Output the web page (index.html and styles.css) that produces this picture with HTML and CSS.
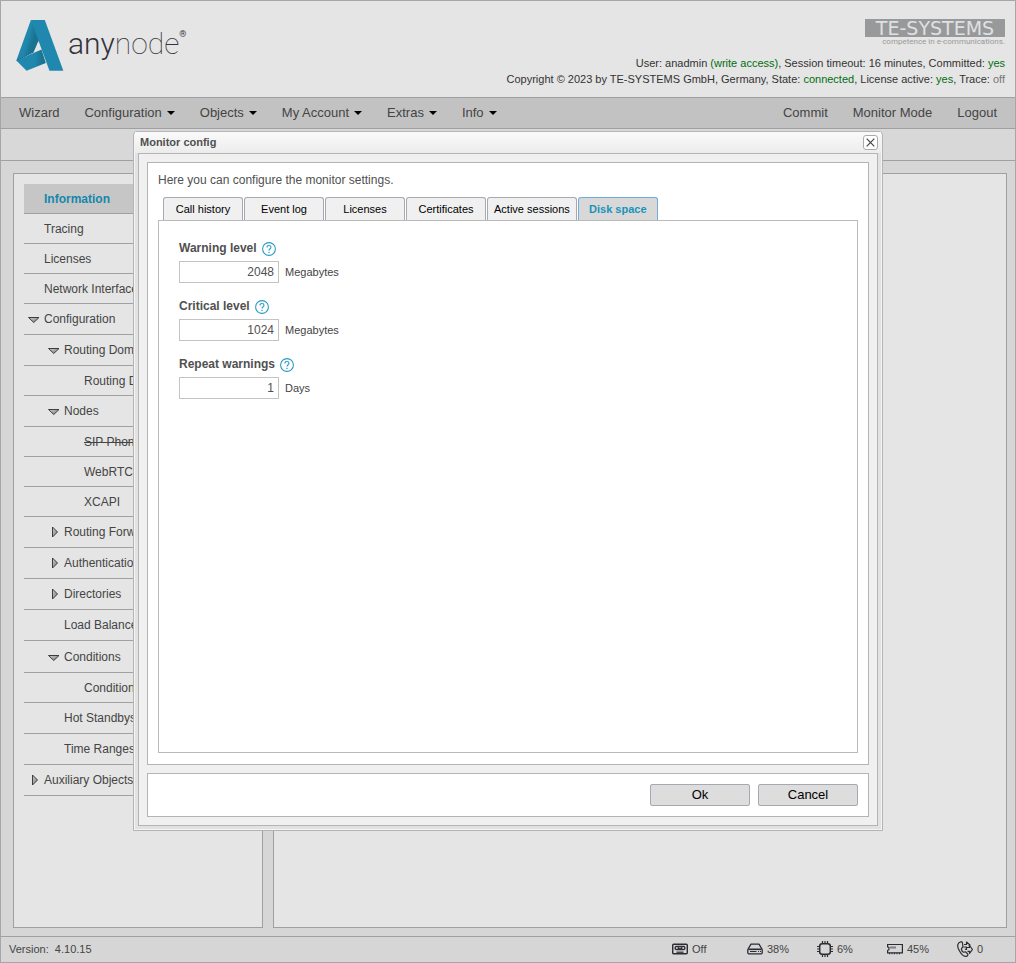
FILE: index.html
```html
<!DOCTYPE html>
<html lang="en">
<head>
<meta charset="utf-8">
<meta name="viewport" content="width=device-width, initial-scale=1">
<title>anynode - Monitor config</title>
<link rel="stylesheet" href="styles.css">
</head>
<body>
<svg class="sprite" aria-hidden="true">
  <defs>
    <linearGradient id="arrow-fill" x1="0" y1="0" x2="1" y2="1">
      <stop offset="0" stop-color="#d0d0d0"/><stop offset="1" stop-color="#777"/>
    </linearGradient>
    <symbol id="open" viewBox="0 0 12 12"><path d="M.5 4.500h10.500L5.750 9.500z" fill="url(#arrow-fill)" stroke="#3c3c3c"/></symbol>
    <symbol id="closed" viewBox="0 0 12 12"><path d="M4.500 1v10L9.500 6z" fill="url(#arrow-fill)" stroke="#3c3c3c"/></symbol>
    <symbol id="help" viewBox="0 0 14 14">
      <circle cx="7" cy="7" r="6.4" fill="none" stroke="#2a9cc4" stroke-width="1.1"/>
      <path d="M5 5.4C5 2.9 9 3 9 5.3 9 6.8 7 6.8 7 8.6" fill="none" stroke="#2a9cc4" stroke-width="1.1"/>
      <path d="M6.4 9.7h1.2V11H6.4z" fill="#2a9cc4"/>
    </symbol>
  </defs>
</svg>

<div class="app">
  <header class="header">
    <div class="brand">
      <svg class="brand__mark" viewBox="48 60 143 154" aria-hidden="true">
        <defs>
          <linearGradient id="fold-a" x1="0.3" y1="0.2" x2="0.8" y2="0.45"><stop offset="0.5" stop-color="#2088ae"/><stop offset="1" stop-color="#1a7190"/></linearGradient>
          <linearGradient id="fold-b" x1="0" y1="0" x2="1" y2="0"><stop offset="0.6" stop-color="#2088ae"/><stop offset="1" stop-color="#186b89"/></linearGradient>
        </defs>
        <path d="M92 60 48 182 101 156 116 122 110 84z" fill="url(#fold-a)"/>
        <path d="M48 182 124 149 137 190 79 213z" fill="url(#fold-b)"/>
        <path d="M49 182 101 156" stroke="#196f8e" stroke-width="3"/>
        <path d="M92 60h42l56 153h-42z" fill="#2088ae"/>
        <path d="M114 126 102 156 123 149z" fill="#e5e5e5"/>
      </svg>
      <span class="brand__name"><span class="brand__any">any</span>node<sup class="brand__reg">®</sup></span>
    </div>
    <div class="status">
      <div class="vendor">
        <div class="vendor__name">TE-SYSTEMS</div>
        <div class="vendor__claim">competence in e-communications.</div>
      </div>
      <p class="status__line">User: anadmin <span class="good">(write access)</span>, Session timeout: 16 minutes, Committed: <span class="good">yes</span></p>
      <p class="status__line">Copyright © 2023 by TE-SYSTEMS GmbH, Germany, State: <span class="good">connected</span>, License active: <span class="good">yes</span>, Trace: <span class="muted">off</span></p>
    </div>
  </header>

  <nav class="menu" aria-label="Main">
    <div class="menu__group">
      <button class="menu__item">Wizard</button>
      <button class="menu__item menu__item--drop">Configuration</button>
      <button class="menu__item menu__item--drop">Objects</button>
      <button class="menu__item menu__item--drop">My Account</button>
      <button class="menu__item menu__item--drop">Extras</button>
      <button class="menu__item menu__item--drop">Info</button>
    </div>
    <div class="menu__group">
      <button class="menu__item">Commit</button>
      <button class="menu__item">Monitor Mode</button>
      <button class="menu__item">Logout</button>
    </div>
  </nav>
  <div class="toolbar"></div>

  <main class="workspace">
    <aside class="panel">
      <ul class="tree">
        <li class="tree__item tree__item--active"><a href="#">Information</a></li>
        <li class="tree__item"><a href="#">Tracing</a></li>
        <li class="tree__item"><a href="#">Licenses</a></li>
        <li class="tree__item"><a href="#">Network Interfaces</a></li>
        <li class="tree__item tree__item--node"><svg class="arrow"><use href="#open"/></svg><a href="#">Configuration</a></li>
        <li class="tree__item tree__item--node level-2"><svg class="arrow"><use href="#open"/></svg><a href="#">Routing Domains</a></li>
        <li class="tree__item level-3"><a href="#">Routing Domain</a></li>
        <li class="tree__item tree__item--node level-2"><svg class="arrow"><use href="#open"/></svg><a href="#">Nodes</a></li>
        <li class="tree__item tree__item--off level-3"><a href="#">SIP Phones</a></li>
        <li class="tree__item level-3"><a href="#">WebRTC</a></li>
        <li class="tree__item level-3"><a href="#">XCAPI</a></li>
        <li class="tree__item tree__item--node level-2"><svg class="arrow"><use href="#closed"/></svg><a href="#">Routing Forwards</a></li>
        <li class="tree__item tree__item--node level-2"><svg class="arrow"><use href="#closed"/></svg><a href="#">Authentication</a></li>
        <li class="tree__item tree__item--node level-2"><svg class="arrow"><use href="#closed"/></svg><a href="#">Directories</a></li>
        <li class="tree__item tree__item--node level-2"><a href="#">Load Balancers</a></li>
        <li class="tree__item tree__item--tall level-2"><svg class="arrow"><use href="#open"/></svg><a href="#">Conditions</a></li>
        <li class="tree__item level-3"><a href="#">Condition</a></li>
        <li class="tree__item tree__item--node level-2"><a href="#">Hot Standbys</a></li>
        <li class="tree__item tree__item--node level-2"><a href="#">Time Ranges</a></li>
        <li class="tree__item tree__item--node"><svg class="arrow"><use href="#closed"/></svg><a href="#">Auxiliary Objects</a></li>
      </ul>
    </aside>
    <section class="panel"></section>
  </main>

  <footer class="footer">
    <span class="footer__version">Version:&nbsp; 4.10.15</span>
    <div class="meters">
      <span class="meter meter--wide">
        <svg class="meter__icon" viewBox="0 0 16 16"><rect x=".7" y="3.200" width="14.600" height="9.600" rx="1" fill="none" stroke="#2c2c34" stroke-width="1.400"/><rect x="2.500" y="4.800" width="11" height="4.400" rx="2" fill="#2c2c34"/><circle cx="4.800" cy="7" r="1" fill="#d6d6d6"/><circle cx="11.200" cy="7" r="1" fill="#d6d6d6"/><path d="M6.800 5.800h2.400v1.500H6.800z" fill="#888"/><path d="M4.500 11.200h7" stroke="#2c2c34" stroke-width="1.200"/></svg>Off</span>
      <span class="meter">
        <svg class="meter__icon" viewBox="0 0 16 16" fill="none" stroke="#2c2c34" stroke-width="1.300" stroke-linejoin="round"><path d="M4 3.200h8l3.200 5.300v3.300q0 1-1 1H1.800q-1 0-1-1V8.500z"/><path d="M1.500 8.300h13" stroke-width="1.600"/><path d="M3 10.500h6.500M11 10.500h1m1 0h1" stroke-width="1"/></svg>38%</span>
      <span class="meter">
        <svg class="meter__icon" viewBox="0 0 16 16" fill="none" stroke="#2c2c34"><rect x="2.700" y="2.700" width="10.600" height="10.600" rx="2.500" stroke-width="1.500"/><path stroke-width="1.200" d="M5.500 0v2.500M8 0v2.500M10.500 0v2.500M5.500 13.500V16M8 13.500V16M10.500 13.500V16M0 5.500h2.500M0 8h2.500M0 10.500h2.500M13.500 5.500H16M13.500 8H16M13.500 10.500H16"/></svg>6%</span>
      <span class="meter">
        <svg class="meter__icon" viewBox="0 0 16 16" fill="none" stroke="#2c2c34"><path stroke-width="1.200" d="M.6 3.500h14.800v8.300H.6V9.500l1.300-.8V6.500L.6 5.800z"/><path d="M3.500 6.500h1m1 0h1m1 0h1" stroke-width="2"/><path stroke-width="1.300" d="M2 12.500h1m1.500 0h1m1.500 0h1m1.500 0h1m1.500 0h1"/></svg>45%</span>
      <span class="meter">
        <svg class="meter__icon" viewBox="0 0 16 16" fill="none" stroke="#2c2c34" stroke-width="1.200" stroke-linejoin="round"><path d="M3.600.8C.5 1.500-.2 5 2 9c2 4 5 6.800 7.300 6.300 1.400-.3 2-1.700 1.300-2.500L8.800 11c-1-.6-1.600.6-2.400.2C5.200 10.400 4.300 8.600 4.500 7.500c.2-.8 1.400-.6 1.400-1.500L5.500 2C5.200 1 4.400.6 3.600.8z"/><path d="M7 3.500h2.500V1l3.500 3-1.300 1.200M6.500 6h3v2.500L7.800 8M10 6.500h2.500v-2l3 4-3 3.800v-2h-2"/></svg>0</span>
    </div>
  </footer>
</div>

<div class="overlay">
  <section class="dialog" role="dialog" aria-labelledby="dialog-title">
    <div class="dialog__bar">
      <h1 class="dialog__title" id="dialog-title">Monitor config</h1>
      <button class="dialog__close" aria-label="Close"><svg viewBox="0 0 9 9" width="9" height="9"><path d="M.7.7l7.600 7.600M8.300.7L.7 8.300" stroke="#444" stroke-width="1.200"/></svg></button>
    </div>
    <form class="dialog__body">
      <div class="box box--main">
        <p class="intro">Here you can configure the monitor settings.</p>
        <div class="tabs" role="tablist">
          <button type="button" class="tab" role="tab">Call history</button>
          <button type="button" class="tab" role="tab">Event log</button>
          <button type="button" class="tab" role="tab">Licenses</button>
          <button type="button" class="tab" role="tab">Certificates</button>
          <button type="button" class="tab" role="tab">Active sessions</button>
          <button type="button" class="tab tab--active" role="tab" aria-selected="true">Disk space</button>
        </div>
        <div class="tabpanel" role="tabpanel">
          <div class="field">
            <div class="field__head"><label for="warning">Warning level</label><svg class="help"><use href="#help"/></svg></div>
            <div class="field__row"><input class="field__input" id="warning" type="text" value="2048"><span>Megabytes</span></div>
          </div>
          <div class="field">
            <div class="field__head"><label for="critical">Critical level</label><svg class="help"><use href="#help"/></svg></div>
            <div class="field__row"><input class="field__input" id="critical" type="text" value="1024"><span>Megabytes</span></div>
          </div>
          <div class="field">
            <div class="field__head"><label for="repeat">Repeat warnings</label><svg class="help"><use href="#help"/></svg></div>
            <div class="field__row"><input class="field__input" id="repeat" type="text" value="1"><span>Days</span></div>
          </div>
        </div>
      </div>
      <div class="box box--actions">
        <button type="button" class="action">Ok</button>
        <button type="button" class="action">Cancel</button>
      </div>
    </form>
  </section>
</div>
</body>
</html>
```
FILE: styles.css
```css
* { box-sizing: border-box; }

body {
  margin: 0;
  font: 12px/16px "Liberation Sans", Arial, sans-serif;
  color: #444;
}

p, h1, ul { margin: 0; padding: 0; }
button, input { font: inherit; color: inherit; margin: 0; }
a { color: inherit; text-decoration: inherit; }
.sprite { position: absolute; width: 0; height: 0; }

.app {
  display: flex;
  flex-direction: column;
  min-height: 100vh;
  border: 1px solid #a6a6a6;
  background: #d6d6d6;
}

/* Header */
.header {
  display: flex;
  justify-content: space-between;
  height: 97px;
  padding: 18px 10px 0 15px;
  border-bottom: 1px solid #a0a0a0;
  background: #e5e5e5;
}
.brand { display: flex; align-items: flex-start; gap: 4px; padding-top: 1px; }
.brand__mark { width: 48px; height: 51px; }
.brand__name {
  display: flex;
  font: 100 30px/48px Roboto, sans-serif;
  color: #33333b;
}
.brand__any { font-weight: 300; }
.brand__reg { font-size: 9px; line-height: 28px; font-weight: 400; }
.status { text-align: right; font-size: 11px; color: #333; }
.status__line { line-height: 16px; }
.vendor { display: flex; flex-direction: column; align-items: flex-end; margin-bottom: 8px; }
.vendor__name {
  width: 140px;
  background: #97999b;
  color: #e0e0e0;
  font: 19px/18px "DejaVu Sans", sans-serif;
  text-align: center;
}
.vendor__claim { font: 8px/10px Roboto, sans-serif; color: #999; }
.good { color: #006e0e; }
.muted { color: #777; }

/* Main menu */
.menu {
  display: flex;
  justify-content: space-between;
  height: 31px;
  padding: 0 18px;
  border-bottom: 1px solid #a0a0a0;
  background: #c2c2c2;
}
.menu__group { display: flex; gap: 25px; }
.menu__item {
  display: flex;
  align-items: center;
  gap: 5px;
  padding: 0;
  border: 0;
  background: none;
  font-size: 13px;
  white-space: nowrap;
}
.menu__item--drop::after {
  content: "";
  border: 4px solid transparent;
  border-top-color: #000;
  border-bottom: 0;
}
.toolbar { height: 32px; border-bottom: 1px solid #a0a0a0; background: #d8d8d8; }

/* Workspace */
.workspace {
  flex: 1;
  display: grid;
  grid-template-columns: 250px 1fr;
  gap: 10px;
  padding: 12px 8px 8px 12px;
}
.panel { padding: 10px; border: 1px solid #a0a0a0; background: #e5e5e5; }
.tree { list-style: none; }
.tree__item {
  display: flex;
  align-items: center;
  height: 30px;
  padding-left: 20px;
  border-bottom: 1px solid #a0a0a0;
  white-space: nowrap;
}
.tree__item--node { height: 31px; }
.tree__item--tall { height: 32px; }
.tree__item--active { background: #c6c6c6; color: #1587ad; font-weight: bold; }
.tree__item--off { text-decoration: line-through; }
.level-2 { padding-left: 40px; }
.level-3 { padding-left: 60px; }
.arrow { width: 12px; height: 12px; margin: 0 4px 0 -16px; }

/* Footer */
.footer {
  display: flex;
  justify-content: space-between;
  align-items: center;
  height: 26px;
  padding: 0 0 2px 8px;
  border-top: 1px solid #a0a0a0;
  font-size: 11px;
}
.meters { display: flex; }
.meter { display: flex; align-items: center; gap: 4px; flex: 0 0 70px; }
.meter:last-child { flex-basis: 58px; }
.meter--wide { flex-basis: 75px; }
.meter__icon { width: 16px; height: 16px; }

/* Dialog */
.overlay {
  position: absolute;
  inset: 0;
  display: flex;
  align-items: center;
  justify-content: center;
  padding-bottom: 2px;
}
.dialog {
  display: flex;
  flex-direction: column;
  width: 750px;
  min-height: 700px;
  padding: 0 4px 4px;
  border: 1px solid #b4b4b4;
  border-radius: 4px 4px 0 0;
  background: #e2e2e2;
  box-shadow: inset 0 0 0 1px #f4f4f4;
}
.dialog__bar {
  display: flex;
  justify-content: space-between;
  align-items: center;
  height: 21px;
  margin: 0 -3px;
  padding: 0 3px 0 5px;
  background: linear-gradient(#fafafa, #ececec);
}
.dialog__title { font-size: 11px; line-height: 16px; color: #505050; }
.dialog__close {
  display: flex;
  align-items: center;
  justify-content: center;
  width: 15px;
  height: 15px;
  padding: 0;
  border: 1px solid #aaa;
  border-radius: 3px;
  background: #fff;
}
.dialog__body {
  flex: 1;
  display: flex;
  flex-direction: column;
  gap: 8px;
  padding: 8px;
  border: 1px solid #b4b4b4;
  background: #f0f0f0;
}
.box { border: 1px solid #b4b4b4; background: #fff; }
.box--main { flex: 1; display: flex; flex-direction: column; padding: 9px 10px 11px; }
.intro { margin-bottom: 9px; color: #505050; }
.tabs { display: flex; gap: 1px; padding-left: 5px; }
.tab {
  min-width: 80px;
  height: 23px;
  padding: 0 6px;
  border: 1px solid #a6a8b2;
  border-bottom: 0;
  border-radius: 3px 3px 0 0;
  background: #f0f0f0;
  color: #000;
  font-size: 11px;
}
.tab--active {
  height: 24px;
  margin-bottom: -1px;
  border-color: #6eade0;
  background: #d8d8d8;
  color: #1a93bb;
  font-weight: bold;
}
.tabpanel {
  flex: 1;
  display: flex;
  flex-direction: column;
  gap: 15px;
  padding: 19px 20px;
  border: 1px solid #bababa;
}
.field__head { display: flex; gap: 5px; height: 21px; font-weight: bold; color: #505050; }
.help { width: 14px; height: 14px; margin-top: 2px; }
.field__row { display: flex; align-items: center; gap: 6px; font-size: 11px; }
.field__input {
  width: 100px;
  height: 22px;
  padding: 0 4px;
  border: 1px solid #c4c4c4;
  background: #fff;
  font-size: 12px;
  text-align: right;
  color: #505050;
}
.box--actions { display: flex; justify-content: flex-end; gap: 8px; padding: 10px; }
.action {
  width: 100px;
  height: 22px;
  padding: 0;
  border: 1px solid #a6a8b2;
  border-radius: 2px;
  background: #ddd;
  color: #000;
  font-size: 13px;
}
```
